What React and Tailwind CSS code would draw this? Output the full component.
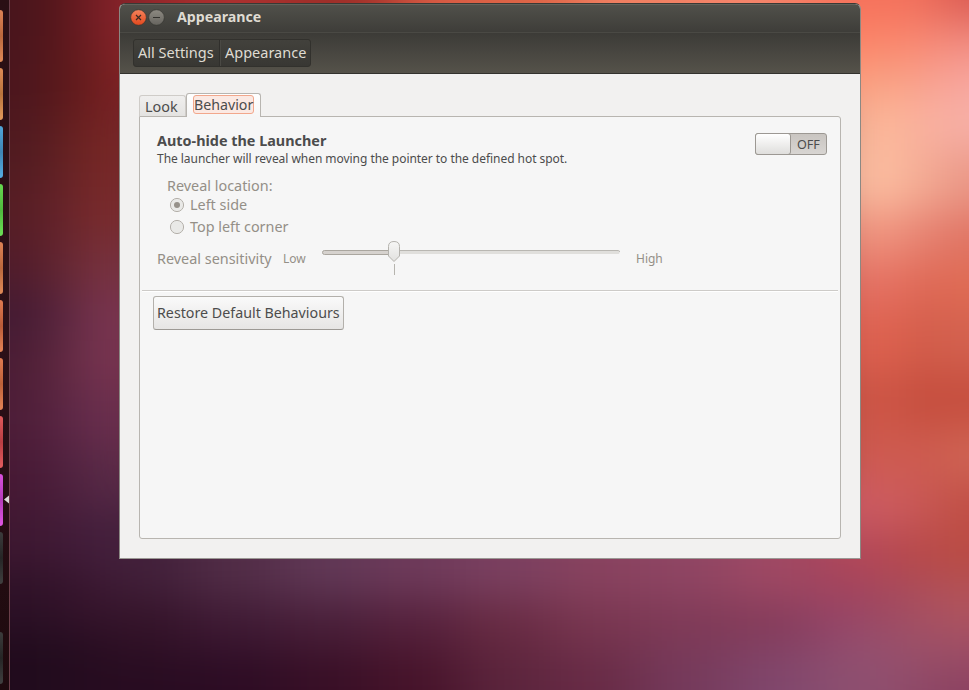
const LAUNCHER_TILES = [
  "bg-linear-to-b from-[#dc8255] via-[#b9683d] to-[#e08a58]",
  "bg-linear-to-b from-[#dc8a55] via-[#b8743c] to-[#e29a5c]",
  "bg-linear-to-b from-[#4fa6da] via-[#3f86b4] to-[#55aee2]",
  "bg-linear-to-b from-[#66d850] via-[#4fb83e] to-[#6be056]",
  "bg-linear-to-b from-[#dc8255] via-[#b9683d] to-[#e08a58]",
  "bg-linear-to-b from-[#e07a50] via-[#b95c38] to-[#e48456]",
  "bg-linear-to-b from-[#e07a50] via-[#bd6239] to-[#e48456]",
  "bg-linear-to-b from-[#e0595a] via-[#b83e42] to-[#e45c5e]",
  "bg-linear-to-b from-[#d850da] via-[#b43cb8] to-[#e056e2]",
  "bg-linear-to-b from-[#3c3c3c] via-[#262626] to-[#404040]",
];

// Wallpaper colour patches: [y, height, three colours from left to right]
const leftRows = [
  [-90, 140, "#47151d", "#561619", "#84222a"],
  [50, 70, "#4a161e", "#58181a", "#7a2122"],
  [120, 60, "#4e1a20", "#5f2022", "#7e2925"],
  [180, 60, "#551d24", "#64222a", "#802e2c"],
  [240, 50, "#4f1b2a", "#622530", "#7e3642"],
  [290, 50, "#421a32", "#56243c", "#823a56"],
  [340, 50, "#4a1c34", "#5e283e", "#7e3856"],
  [390, 60, "#4c1d37", "#582442", "#6e3252"],
  [450, 60, "#461834", "#4c1f3b", "#5a2c4a"],
  [510, 60, "#3d1730", "#401a36", "#462040"],
  [570, 60, "#2c1126", "#321229", "#3a162f"],
  [630, 150, "#200b1c", "#230c1f", "#280d20"],
];

const rightRows = [
  [-90, 110, "#f5705a", "#f4745f", "#d85850"],
  [20, 40, "#fb8468", "#f98870", "#f08a80"],
  [60, 40, "#faa080", "#f89e88", "#f8a6a0"],
  [100, 50, "#fcb898", "#fab09c", "#f6b0a8"],
  [150, 60, "#fdc0a2", "#f4ae96", "#ea9686"],
  [210, 50, "#f29680", "#e68474", "#e07464"],
  [260, 50, "#e87466", "#dc6654", "#e06c54"],
  [310, 60, "#e26452", "#cf5a47", "#d46250"],
  [370, 60, "#d05848", "#c44c3c", "#c65040"],
  [430, 50, "#d05c52", "#cc584c", "#d06656"],
  [480, 50, "#ce5c64", "#c95a56", "#c04e44"],
  [530, 50, "#b54856", "#b64848", "#ba4c44"],
  [580, 50, "#9e4660", "#a85060", "#b2545c"],
  [630, 40, "#945070", "#9a5068", "#9e4e66"],
  [670, 110, "#8e4f70", "#8e4866", "#8a4060"],
];

// [x, width, three colours from top to bottom]
const bottomCols = [
  [110, 80, "#42203a", "#341329", "#280c21"],
  [190, 90, "#522d47", "#3f1a34", "#2d0c24"],
  [280, 90, "#613856", "#491f39", "#380f26"],
  [370, 90, "#6e3a5a", "#55213c", "#46132a"],
  [460, 90, "#7b4060", "#682b43", "#5b243c"],
  [550, 90, "#88425f", "#783650", "#682b46"],
  [640, 90, "#8f4563", "#7f3a57", "#753a5b"],
  [730, 80, "#9f4964", "#853c5b", "#80466c"],
  [810, 38, "#a7435b", "#93456a", "#8b4f70"],
];

const topCols = [
  [145, 40, "#98282a"],
  [185, 100, "#ab302f"],
  [285, 110, "#9e2f29"],
  [395, 80, "#d85b44"],
  [475, 100, "#dc6446"],
  [575, 120, "#f08062"],
  [695, 110, "#f4846a"],
  [805, 43, "#f6745a"],
];

const patches = [
  ...topCols.map(([x, w, c]) => [x, -90, w, 190, c]),
  ...bottomCols.flatMap(([x, w, a, b, c]) => [
    [x, 490, w, 109, a],
    [x, 599, w, 51, b],
    [x, 650, w, 130, c],
  ]),
  ...leftRows.flatMap(([y, h, a, b, c]) => [
    [-90, y, 130, h, a],
    [40, y, 45, h, b],
    [85, y, y < 500 ? 60 : 25, h, c],
  ]),
  ...rightRows.flatMap(([y, h, a, b, c]) => [
    [y < 500 ? 820 : 848, y, y < 500 ? 80 : 52, h, a],
    [900, y, 40, h, b],
    [940, y, 120, h, c],
  ]),
];

function Wallpaper() {
  return (
    <svg className="absolute inset-0 h-full w-full" viewBox="0 0 969 690">
      <defs>
        <filter id="soft" filterUnits="userSpaceOnUse" x="-90" y="-90" width="1150" height="870" colorInterpolationFilters="sRGB">
          <feGaussianBlur stdDeviation="29 21" />
        </filter>
      </defs>
      <rect width="969" height="690" fill="#5a2035" />
      <g filter="url(#soft)" shapeRendering="crispEdges">
        {patches.map(([x, y, w, h, c], i) => (
          <rect key={i} x={x} y={y} width={w} height={h} fill={c} />
        ))}
      </g>
    </svg>
  );
}

function Launcher() {
  return (
    <aside className="relative flex h-full w-[10px] flex-col gap-[6px] border-r border-[#6b3f49] bg-linear-to-b from-[#2a0f14] via-[#2c1018] to-[#1e0a0e] pt-[10px]">
      {LAUNCHER_TILES.map((tile, i) => (
        <div key={i} className={`h-[52px] w-[3px] shrink-0 rounded-r-[3px] ${tile}`} />
      ))}
      <div className="mt-[42px] h-[52px] w-[3px] shrink-0 rounded-r-[3px] bg-linear-to-b from-[#3c3c3c] via-[#262626] to-[#404040]" />
      <svg className="absolute top-[495px] left-[4px] h-[9px] w-[5px]" viewBox="0 0 5 9">
        <path d="M5 0.5V8.5L0 4.5Z" fill="#dcdad8" />
      </svg>
    </aside>
  );
}

function TitleBar() {
  return (
    <header className="flex h-[28px] items-center border-t border-[#62625a] bg-linear-to-b from-[#50504a] to-[#3e3d39] pb-[4px] pl-[10px]">
      <svg className="h-[18px] w-[37px]" viewBox="0 0 37 18">
        <defs>
          <linearGradient id="close" x2="0" y2="1">
            <stop offset="0" stopColor="#f5835c" />
            <stop offset="1" stopColor="#e2481d" />
          </linearGradient>
          <linearGradient id="min" x2="0" y2="1">
            <stop offset="0" stopColor="#8d8a82" />
            <stop offset="1" stopColor="#66645e" />
          </linearGradient>
        </defs>
        <circle cx="8.5" cy="9.5" r="7.8" fill="url(#close)" stroke="#33322e" strokeWidth=".6" />
        <path d="M6 7l5 5M11 7l-5 5" stroke="#3c2a22" strokeWidth="1.2" />
        <circle cx="26.5" cy="9.5" r="7.8" fill="url(#min)" stroke="#33322e" strokeWidth=".6" />
        <path d="M23 9.5h7" stroke="#33322e" strokeWidth="1" />
      </svg>
      <h1 className="ml-[10px] text-[14.2px] leading-5 font-bold text-[#dfdbd2]">Appearance</h1>
    </header>
  );
}

function Toolbar() {
  return (
    <nav className="flex h-[42px] items-center border-t border-b border-t-[#4a4944] border-b-[#33322e] bg-linear-to-b from-[#3c3b37] to-[#55524a] pl-[13px] text-[14.5px] text-[#dfdbd2]">
      <div className="flex h-[28px] rounded-[3px] border border-[#32312d] bg-linear-to-b from-[#42413c] to-[#383733]">
        <button className="w-[86px] border-r border-[#302f2c] pb-px pl-[4px] text-left whitespace-nowrap">All Settings</button>
        <button className="w-[90px] border-l border-[#4a4944] pb-px pl-[4px] text-left whitespace-nowrap">Appearance</button>
      </div>
    </nav>
  );
}

function Radio({ label, checked }) {
  return (
    <label className="flex h-[22px] items-center">
      <svg className="h-[16px] w-[16px]" viewBox="0 0 16 16">
        <circle cx="8" cy="8" r="6.6" fill="#e9e9e7" stroke="#b4b0aa" />
        {checked && <circle cx="8" cy="8" r="3" fill="#96918a" />}
      </svg>
      <span className="ml-[5px] whitespace-nowrap">{label}</span>
    </label>
  );
}

function Slider() {
  return (
    <svg className="h-[36px] w-[300px]" viewBox="0 0 300 36">
      <defs>
        <linearGradient id="knob" x2="0" y2="1">
          <stop offset="0" stopColor="#f6f6f5" />
          <stop offset="1" stopColor="#e2e1df" />
        </linearGradient>
      </defs>
      <rect x="1.5" y="10.5" width="297" height="3.5" rx="1.5" fill="#e0dfdc" />
      <path d="M74 10.5H297.5Q298.5 10.5 298.5 12" fill="none" stroke="#b9b7b2" />
      <rect x="1.5" y="10.5" width="74" height="4" rx="2" fill="#d6d2ce" stroke="#aaa69f" />
      <path d="M67.5 6.5Q67.5 1.5 73 1.5T78.5 6.5V16L73 21.5L67.5 16Z" fill="url(#knob)" stroke="#b4b2ad" />
      <path d="M73.5 24V35" stroke="#b6b4ae" />
    </svg>
  );
}

export default function App() {
  return (
    <div className="relative h-[690px] w-[969px] overflow-hidden font-['Noto_Sans',sans-serif]">
      <Wallpaper />
      <div className="relative flex h-full">
        <Launcher />
        <main className="mt-[3px] ml-[109px] flex h-[556px] w-[742px] flex-col overflow-hidden rounded-t-[6px] border border-t-[#3a3935] border-r-[#8b8883] border-b-[#9b9894] border-l-[#8b8883] bg-[#f2f1f0]">
          <TitleBar />
          <Toolbar />
          <section className="px-[19px] pt-[18px]">
            <div className="flex h-[25px] items-end pb-px text-[14.4px] text-[#4c4c4c]">
              <button className="h-[21px] w-[47px] rounded-t-[3px] border border-b-0 border-[#cfccc8] bg-linear-to-b from-[#f0efee] to-[#e4e3e1] pl-[5px] text-left leading-[19px]">Look</button>
              <button className="relative -mb-px h-[24px] w-[75px] rounded-t-[3px] border border-b-0 border-[#b8b5b0] bg-linear-to-b from-white to-[#f6f6f6] pb-[2px] pl-[6px]">
                <span className="block h-[19px] w-[61px] rounded-[3px] border border-[#f2a78c] bg-[#fbe9e3] text-left text-[14.2px] leading-[17px] whitespace-nowrap">Behavior</span>
              </button>
            </div>
            <div className="-mt-px h-[423px] w-[702px] rounded-[3px] rounded-tl-none border border-[#b8b5b0] bg-[#f6f6f6] px-[2px] text-[14.4px] text-[#948f87]">
              <div className="flex h-[50px] justify-between pt-[15px] pr-[11px] pl-[15px] text-[#4c4c4c]">
                <div>
                  <h2 className="text-[14.4px] leading-[18px] font-bold whitespace-nowrap">Auto-hide the Launcher</h2>
                  <p className="text-[12px] leading-[17px] tracking-[-0.045px] whitespace-nowrap">The launcher will reveal when moving the pointer to the defined hot spot.</p>
                </div>
                <button className="mt-px flex h-[22px] w-[72px] rounded-[3px] border border-[#9c9893] bg-linear-to-b from-[#c9c5c1] to-[#d8d5d2] text-[12.6px]">
                  <span className="-my-px -ml-px h-[22px] w-[36px] rounded-[3px] border border-[#9c9893] bg-linear-to-b from-white to-[#dfdedc]" />
                  <span className="ml-[6px] leading-[21px]">OFF</span>
                </button>
              </div>
              <div className="pt-[9px] pl-[25px] leading-5 whitespace-nowrap">
                <p className="h-[18px] leading-[20px]">Reveal location:</p>
                <div className="pl-[2px]">
                  <Radio label="Left side" checked />
                  <Radio label="Top left corner" />
                </div>
              </div>
              <div className="flex h-[52px] pt-[2px] pl-[15px] whitespace-nowrap">
                <span className="w-[126px] pt-[9px] leading-5">Reveal sensitivity</span>
                <span className="w-[38px] pt-[9px] text-[12px] leading-5">Low</span>
                <Slider />
                <span className="ml-[15px] pt-[9px] text-[12px] leading-5">High</span>
              </div>
              <div className="h-[2px] border-t border-b border-t-[#cdcbc8] border-b-white" />
              <button className="mt-[4px] ml-[11px] flex h-[34px] w-[191px] items-center rounded-[3px] border border-[#b3b0ab] border-b-[#9c9994] bg-linear-to-b from-[#fafafa] to-[#e6e5e4] pl-[3px] text-[14.25px] whitespace-nowrap text-[#4c4c4c]">Restore Default Behaviours</button>
            </div>
          </section>
        </main>
      </div>
    </div>
  );
}
